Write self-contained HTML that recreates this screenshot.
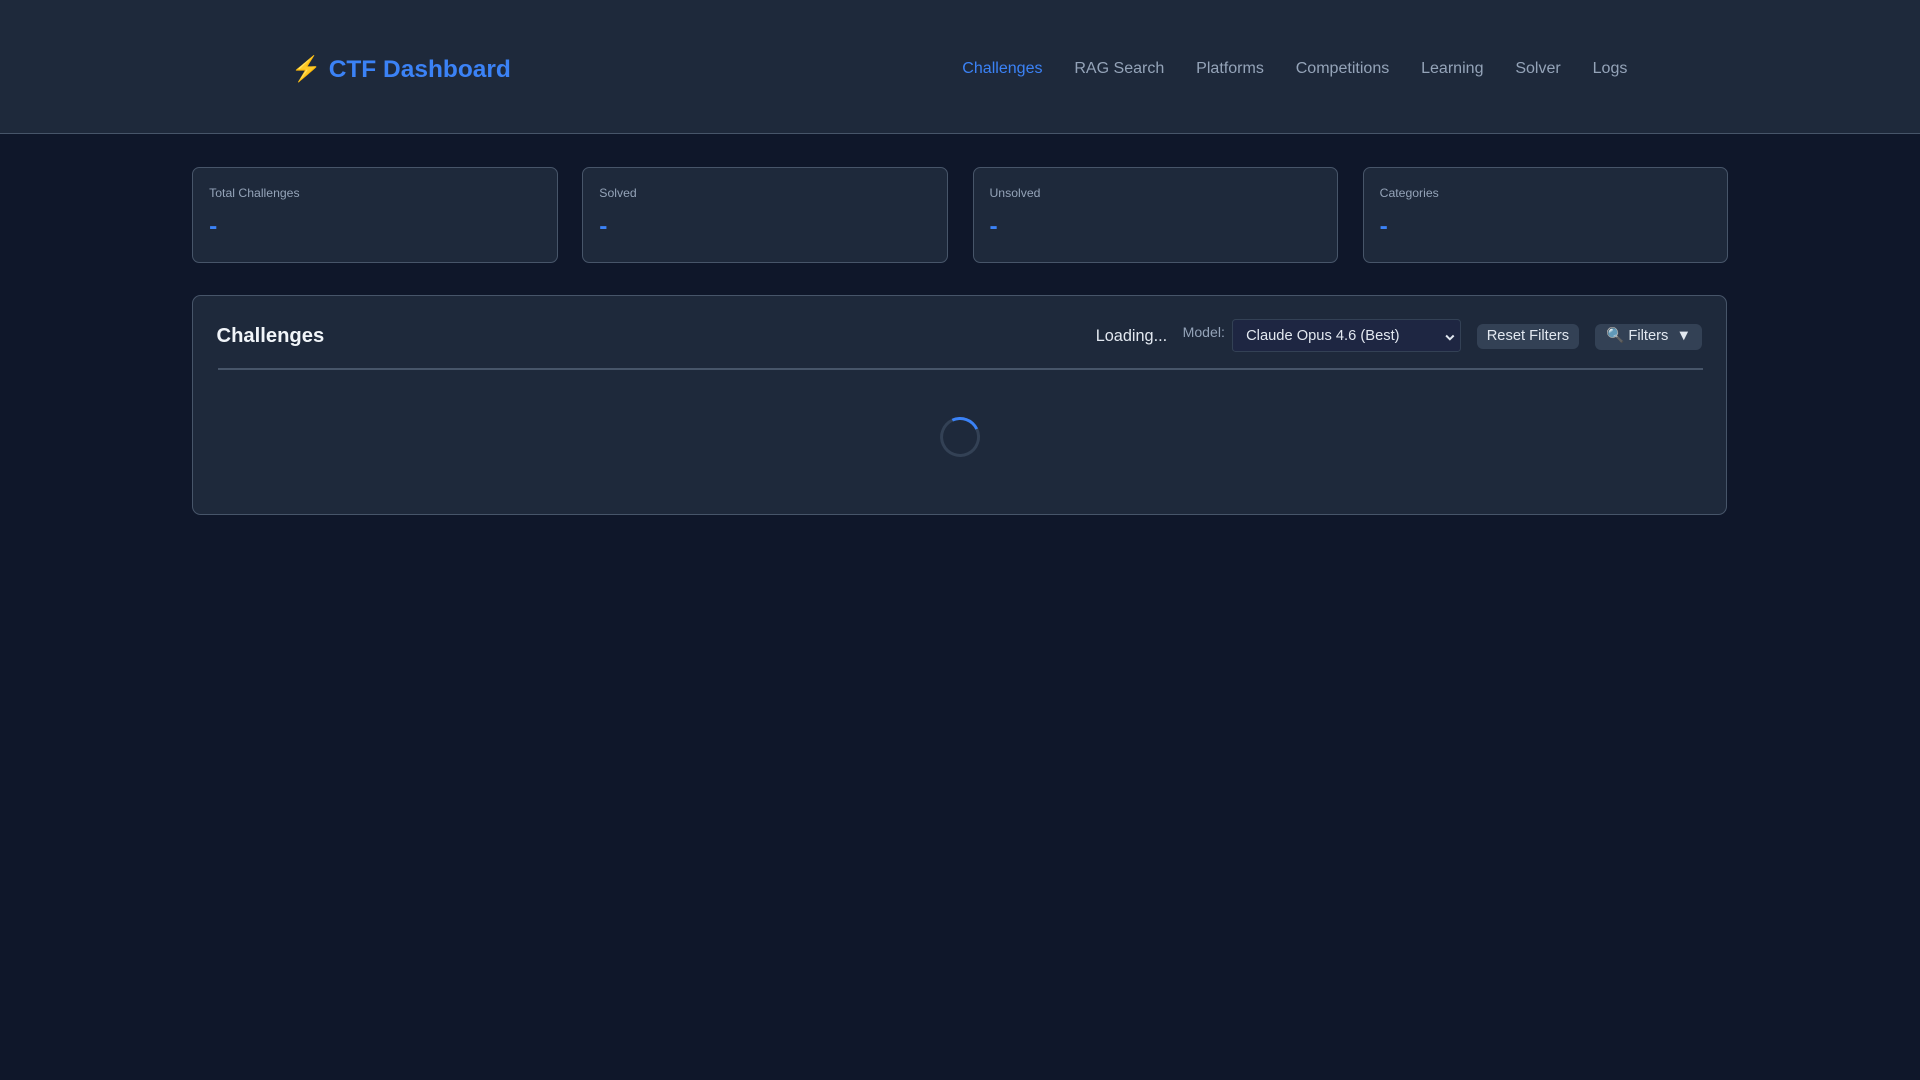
<!DOCTYPE html>
<html><head><meta charset="utf-8"><style>
html{zoom:1.2245}
body{margin:0;background:#0f172a;font-family:"Liberation Sans",Arial,sans-serif;width:1568px;height:882px;overflow:hidden;color:#e2e8f0}
.hdr{height:109px;background:#1e293b;border-bottom:1px solid #475569;position:relative}
.logo{position:absolute;left:238px;top:44px;font-size:20px;font-weight:bold;color:#3b82f6}
.logo .b{color:#fbbf24}
.nav{position:absolute;right:239px;top:48px;font-size:13.1px;color:#94a3b8;display:flex;gap:26px}
.nav .a{color:#3b82f6}
.cards{position:absolute;top:136px;left:157px;display:flex;gap:20px}
.card{width:297px;height:77px;background:#1e293b;border:1px solid #475569;border-radius:6px;position:relative}
.card .l{position:absolute;left:13px;top:15px;font-size:10px;color:#94a3b8}
.card .d{position:absolute;left:13px;top:37px;font-size:20px;font-weight:bold;color:#3b82f6}
.panel{position:absolute;left:157px;top:241px;width:1252px;height:178px;background:#1e293b;border:1px solid #475569;border-radius:7px}
.t{position:absolute;left:19px;top:24px;font-size:16.5px;font-weight:bold;color:#f1f5f9}
.ld{position:absolute;left:737px;top:25px;font-size:13.3px;color:#e2e8f0}
.ml{position:absolute;left:808px;top:23px;font-size:11.5px;color:#94a3b8}
.sel{position:absolute;left:848px;top:19px;background:#1e2642;border:1px solid #334155;border-radius:3px;font-size:12px;color:#e2e8f0;box-sizing:border-box;width:187px;height:27px}
.sel span{position:absolute;left:11px;top:6px}
.sel svg{position:absolute;right:4px;top:11px}
.btn{position:absolute;top:23px;height:20px;background:#334155;border-radius:5px;font-size:12px;color:#e2e8f0;line-height:20px;text-align:center}
.div{position:absolute;left:20px;top:59px;width:1213px;height:1px;background:#475569}
.sp{position:absolute;left:610px;top:99px;width:28px;height:28px;border:3px solid #334155;border-top-color:#3b82f6;border-radius:50%;transform:rotate(20deg)}
</style></head><body>
<div class="hdr">
<div class="logo"><span class="b">⚡</span> CTF Dashboard</div>
<div class="nav"><span class="a">Challenges</span><span>RAG Search</span><span>Platforms</span><span>Competitions</span><span>Learning</span><span>Solver</span><span>Logs</span></div>
</div>
<div class="cards">
<div class="card"><div class="l">Total Challenges</div><div class="d">-</div></div>
<div class="card"><div class="l">Solved</div><div class="d">-</div></div>
<div class="card"><div class="l">Unsolved</div><div class="d">-</div></div>
<div class="card"><div class="l">Categories</div><div class="d">-</div></div>
</div>
<div class="panel">
<div class="t">Challenges</div>
<div class="ld">Loading...</div>
<div class="ml">Model:</div>
<div class="sel"><span>Claude Opus 4.6 (Best)</span><svg width="8" height="6" viewBox="0 0 9 6"><path d="M1 1l3.5 3.5L8 1" stroke="#e2e8f0" stroke-width="1.8" fill="none"/></svg></div>
<div class="btn" style="left:1048px;width:84px">Reset Filters</div>
<div class="btn" style="left:1145px;width:87px;height:21px">🔍 Filters &nbsp;▼</div>
<div class="div"></div>
<div class="sp"></div>
</div>
</body></html>
